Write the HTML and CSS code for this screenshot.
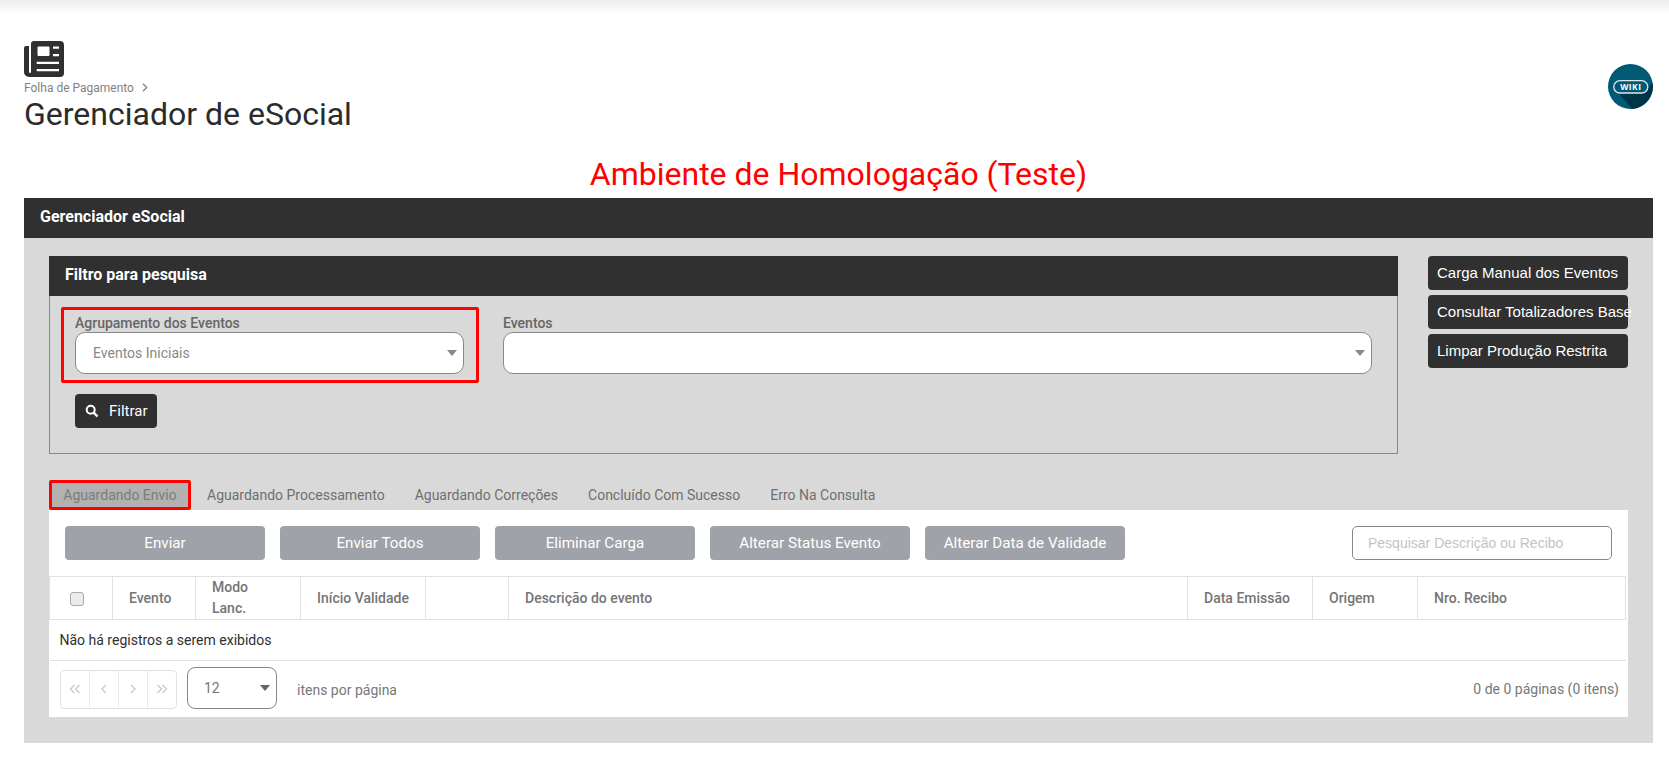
FILE: index.html
```html
<!DOCTYPE html>
<html lang="pt-BR">
<head>
<meta charset="utf-8">
<title>Gerenciador de eSocial</title>
<link rel="stylesheet" href="styles.css">
</head>
<body>
<div class="topbar"></div>
<header class="page-head">
  <div class="head-left">
    <svg class="news-icon" viewBox="0 0 40 36" aria-hidden="true">
      <path fill="#303030" d="M7 3a3 3 0 0 1 3-3h26a4 4 0 0 1 4 4v28a4 4 0 0 1-4 4H5a5 5 0 0 1-5-5V7a2 2 0 0 1 2-2h3v26a1 1 0 0 0 2 0z"/>
      <path fill="#fff" d="M13.500 6.500a1 1 0 0 1 1-1h10a1 1 0 0 1 1 1v7.500a1 1 0 0 1-1 1h-10a1 1 0 0 1-1-1zM29 5.500h6v2.300h-6zM29 13h6v2.300h-6zM12.700 20.700h22.300v2.300H12.700zM12.700 28h22.300v2.300H12.700z"/>
    </svg>
    <div class="crumb">Folha de Pagamento <svg class="crumb-sep" viewBox="0 0 6 9" aria-hidden="true"><path d="M1 .8L4.700 4.500 1 8.200" fill="none" stroke="#828282" stroke-width="1.300"/></svg></div>
    <h1 class="title">Gerenciador de eSocial</h1>
  </div>
  <svg class="wiki" viewBox="0 0 45 45" aria-hidden="true">
    <circle cx="22.500" cy="22.500" r="22.500" fill="#005a73"/>
    <path fill="#00344a" d="M9 27 L37 27 L44.600 19 A22.500 22.500 0 0 1 24 45 Z"/>
    <rect x="5.800" y="16.700" width="34" height="12.300" rx="6.100" fill="#005a73" stroke="#dfe7ea" stroke-width="1.300"/>
    <text x="22.800" y="26.200" text-anchor="middle" class="wiki-text">WIKI</text>
  </svg>
</header>
<div class="env">Ambiente de Homologação (Teste)</div>
<main class="panel">
  <div class="panel-head">Gerenciador eSocial</div>
  <div class="panel-body">
    <div class="top-row">
      <section class="filter">
        <div class="filter-head">Filtro para pesquisa</div>
        <div class="filter-body">
          <div class="fields">
            <div class="field field-marked">
              <label class="field-label">Agrupamento dos Eventos</label>
              <div class="select"><span class="select-value">Eventos Iniciais</span><span class="caret"></span></div>
            </div>
            <div class="field field-wide">
              <label class="field-label">Eventos</label>
              <div class="select"><span class="select-value"></span><span class="caret"></span></div>
            </div>
          </div>
          <button class="btn-filter">
            <svg class="search-icon" viewBox="0 0 14 14" aria-hidden="true"><circle cx="5.700" cy="5.700" r="4" fill="none" stroke="#fff" stroke-width="2"/><path d="M8.700 8.700L12.500 12.500" stroke="#fff" stroke-width="2.400"/></svg>
            Filtrar
          </button>
        </div>
      </section>
      <div class="side-actions">
        <button class="btn-side">Carga Manual dos Eventos</button>
        <button class="btn-side">Consultar Totalizadores Base</button>
        <button class="btn-side">Limpar Produção Restrita</button>
      </div>
    </div>
    <nav class="tabs">
      <span class="tab tab-active">Aguardando Envio</span>
      <span class="tab">Aguardando Processamento</span>
      <span class="tab">Aguardando Correções</span>
      <span class="tab">Concluído Com Sucesso</span>
      <span class="tab">Erro Na Consulta</span>
    </nav>
    <section class="content">
      <div class="toolbar">
        <button class="btn-gray">Enviar</button>
        <button class="btn-gray">Enviar Todos</button>
        <button class="btn-gray">Eliminar Carga</button>
        <button class="btn-gray">Alterar Status Evento</button>
        <button class="btn-gray">Alterar Data de Validade</button>
        <input class="search" type="text" placeholder="Pesquisar Descrição ou Recibo">
      </div>
      <table class="grid">
        <colgroup>
          <col class="c1"><col class="c2"><col class="c3"><col class="c4"><col class="c5"><col class="c6"><col class="c7"><col class="c8"><col class="c9">
        </colgroup>
        <thead>
          <tr>
            <th class="th-check"><span class="checkbox"></span></th>
            <th>Evento</th>
            <th>Modo<br>Lanc.</th>
            <th>Início Validade</th>
            <th></th>
            <th>Descrição do evento</th>
            <th>Data Emissão</th>
            <th>Origem</th>
            <th>Nro. Recibo</th>
          </tr>
        </thead>
        <tbody>
          <tr><td class="empty" colspan="9">Não há registros a serem exibidos</td></tr>
        </tbody>
      </table>
      <div class="pager">
        <div class="pager-btns">
          <span class="page-btn"><svg class="chev" viewBox="0 0 12 10" aria-hidden="true"><path d="M5.500 1L1.500 5l4 4M10.500 1l-4 4 4 4"/></svg></span>
          <span class="page-btn"><svg class="chev" viewBox="0 0 12 10" aria-hidden="true"><path d="M8 1L4 5l4 4"/></svg></span>
          <span class="page-btn"><svg class="chev" viewBox="0 0 12 10" aria-hidden="true"><path d="M4 1l4 4-4 4"/></svg></span>
          <span class="page-btn"><svg class="chev" viewBox="0 0 12 10" aria-hidden="true"><path d="M1.500 1l4 4-4 4M6.500 1l4 4-4 4"/></svg></span>
        </div>
        <div class="page-size"><span>12</span><span class="caret caret-dark"></span></div>
        <span class="per-page">itens por página</span>
        <span class="page-info">0 de 0 páginas (0 itens)</span>
      </div>
    </section>
  </div>
</main>
</body>
</html>
```
FILE: styles.css
```css
* { box-sizing: border-box; }
html, body { margin: 0; padding: 0; background: #fff; }
body { font-family: Roboto, "Liberation Sans", sans-serif; color: #303030; height: 757px; overflow: hidden; }
button { font-family: inherit; cursor: pointer; }

.topbar { height: 14px; background: linear-gradient(#ececec, #fff); }

.page-head { display: flex; justify-content: space-between; padding: 27px 16px 0 24px; height: 125px; }
.news-icon { display: block; width: 40px; height: 36px; }
.crumb { font-size: 12px; line-height: 14px; color: #828282; margin-top: 4px; }
.crumb-sep { width: 6px; height: 9px; margin-left: 5px; }
.title { margin: 0; font-size: 32px; font-weight: 400; line-height: 38px; color: #2b2b2b; }
.wiki { width: 45px; height: 45px; margin-top: 23px; }
.wiki-text { font: 700 8.500px "Open Sans", sans-serif; fill: #fff; letter-spacing: .4px; }

.env { height: 59px; text-align: center; color: #f00; font-size: 32px; line-height: 47px; padding-top: 12px; margin-left: 8px; }

.panel { width: 1629px; margin-left: 24px; background: #d9d9d9; height: 545px; }
.panel-head { height: 40px; background: #303030; color: #fff; font-weight: 700; font-size: 16px; line-height: 38px; padding-left: 16px; }
.panel-body { padding: 18px 25px 0; }

.top-row { display: flex; align-items: flex-start; }
.filter { width: 1349px; height: 198px; border: 1px solid #888; border-top: 0; }
.filter-head { height: 40px; margin: 0 -1px; background: #303030; color: #fff; font-weight: 700; font-size: 16px; line-height: 38px; padding-left: 16px; }
.filter-body { padding: 11px 25px 0 11px; }
.fields { display: flex; gap: 24px; }
.field { width: 418px; height: 76px; border: 3px solid transparent; padding-top: 5px; }
.field-marked { border-color: #f00; border-radius: 2px; padding: 5px 12px 0 11px; }
.field-wide { flex: 1; padding: 5px 0 0; border-left: 0; border-right: 0; }
.field-label { display: block; font-size: 14px; line-height: 16px; font-weight: 500; color: #666; }
.select { height: 42px; background: #fff; border: 1px solid #888; border-radius: 10px; display: flex; align-items: center; justify-content: space-between; padding: 0 6px 0 17px; margin-top: 1px; font-size: 14px; color: #888; }
.caret { display: block; width: 0; height: 0; border-left: 5.500px solid transparent; border-right: 5.500px solid transparent; border-top: 6px solid #888; }
.btn-filter { display: flex; align-items: center; gap: 10px; width: 82px; height: 34px; margin: 11px 0 0 14px; padding: 0 0 0 10px; background: #303030; border: 0; border-radius: 4px; color: #fff; font-size: 15px; }
.search-icon { width: 14px; height: 14px; }

.side-actions { display: flex; flex-direction: column; gap: 5px; margin-left: 30px; }
.btn-side { width: 200px; height: 34px; padding: 0 0 2px 9px; text-align: left; white-space: nowrap; background: #303030; border: 0; border-radius: 4px; color: #fff; font: 15px "Liberation Sans", sans-serif; }

.tabs { display: flex; align-items: stretch; height: 30px; margin-top: 26px; font-size: 14px; color: #6f6f6f; }
.tab { display: flex; align-items: center; padding: 0 14px; line-height: 16px; margin-right: 2px; }
.tab-active { width: 142px; justify-content: center; padding: 0; margin-right: 2px; background: #b2b2b2; color: #7c7c7c; border: 3px solid #f00; border-radius: 2px; }

.content { background: #fff; height: 207px; }
.toolbar { display: flex; gap: 15px; padding: 16px 16px 0 16px; height: 66px; }
.btn-gray { width: 200px; height: 34px; background: #9fa2a8; border: 0; border-radius: 4px; color: #fff; font-size: 15.200px; padding: 0; }
.search { width: 260px; height: 34px; margin-left: auto; border: 1px solid #888; border-radius: 5px; padding: 0 15px; font: 14px "Liberation Sans", sans-serif; background: #fff; }
.search::placeholder { color: #c4c4c4; opacity: 1; }

.grid { width: 1577px; border-collapse: collapse; table-layout: fixed; font-size: 14px; }
.c1 { width: 63px; } .c2 { width: 83px; } .c3 { width: 105px; } .c4 { width: 125px; } .c5 { width: 83px; }
.c6 { width: 679px; } .c7 { width: 125px; } .c8 { width: 105px; } .c9 { width: 208px; }
.grid th { height: 43px; padding: 0 16px; border: 1px solid #dee2e6; text-align: left; font-weight: 500; color: #757575; line-height: 21px; }
.grid th.th-check { padding: 0 0 0 20px; }
.checkbox { display: block; width: 14px; height: 14px; margin-top: 2px; background: #e9ecef; border: 1px solid #aaa; border-radius: 3px; }
.empty { height: 41px; padding: 0 10px; border-bottom: 1px solid #dee2e6; color: #303030; }

.pager { display: flex; align-items: center; height: 56px; padding: 0 9px 0 11px; font-size: 14px; color: #777; }
.pager-btns { display: flex; width: 117px; height: 39px; border: 1px solid #dee2e6; border-radius: 4px; }
.page-btn { flex: 1; display: flex; align-items: center; justify-content: center; border-right: 1px solid #eaeaea; }
.page-btn:last-child { border-right: 0; }
.chev { width: 12px; height: 10px; fill: none; stroke: #c9c9c9; stroke-width: 1.300; }
.page-size { display: flex; align-items: center; justify-content: space-between; width: 90px; height: 42px; margin: 0 0 2px 10px; padding: 0 6px 0 16px; border: 1px solid #888; border-radius: 8px; color: #777; }
.caret-dark { border-top-color: #666; }
.per-page { margin-left: 20px; padding-top: 2px; }
.page-info { margin-left: auto; }
```
